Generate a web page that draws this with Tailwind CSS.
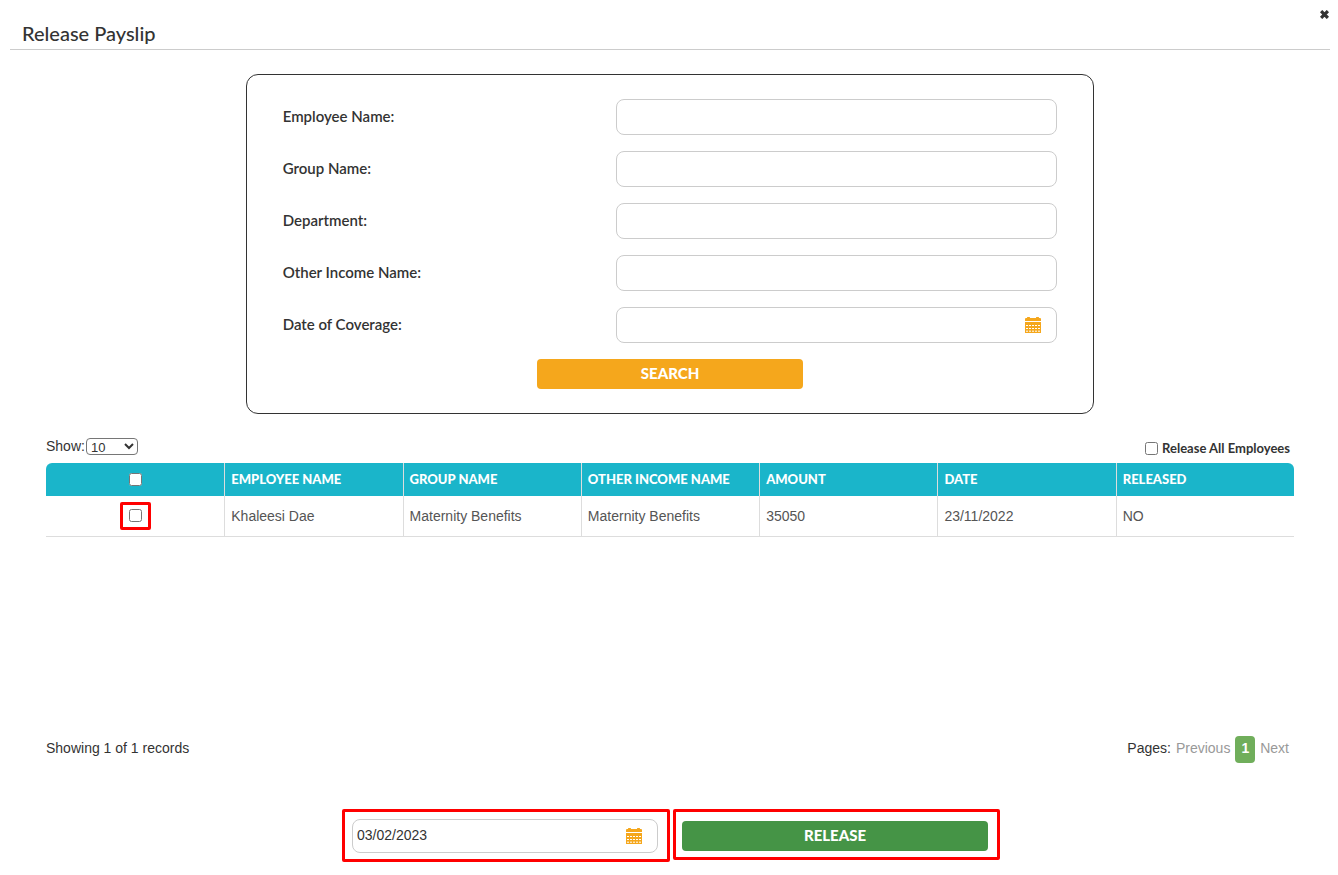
<!DOCTYPE html>
<html lang="en">
<head>
    <meta charset="UTF-8">
    <meta name="viewport" content="width=device-width, initial-scale=1.0">
    <title>Release Payslip</title>
    <script src="https://cdn.jsdelivr.net/npm/@tailwindcss/browser@4"></script>
</head>
<body class="bg-white font-['Liberation_Sans',Arial,sans-serif] text-sm text-[#333]">
    <!-- calendar icon, used by both date fields -->
    <svg class="hidden">
        <symbol id="calendar" viewBox="0 0 16 16">
            <path fill="#f5a71c" d="M0 4V2a1 1 0 0 1 1-1h1a1 1 0 0 1 3 0h6a1 1 0 0 1 3 0h1a1 1 0 0 1 1 1v2zM0 5h16v11H0z"/>
            <path stroke="#fff" stroke-width="1" stroke-dasharray="2 1" d="M1 8.5h14M1 11.5h14M1 14.2h14"/>
        </symbol>
    </svg>

    <header class="relative ml-2.5 mr-2 flex h-[50px] items-end border-b border-[#ccc] px-3 pb-1">
        <h1 class="font-[Lato,sans-serif] text-xl font-medium leading-6">Release Payslip</h1>
        <button type="button" aria-label="Close" class="absolute right-px top-2.5">
            <svg class="size-[9px]" viewBox="0 0 10 10"><path stroke="#333" stroke-width="3.6" d="M1.2 1.2l7.6 7.6M8.8 1.2L1.2 8.8"/></svg>
        </button>
    </header>

    <main class="ml-[46px] mr-11">
        <!-- Search -->
        <form class="mx-auto mt-6 w-[68%] rounded-xl border border-[#333] px-9 py-6">
            <div class="grid grid-cols-[43%_57%] items-center gap-y-4 font-[Lato,sans-serif] text-[15px] font-semibold">
                <label for="employee">Employee Name:</label>
                <input id="employee" type="text" class="h-9 w-full rounded-lg border border-[#ccc] px-3">
                <label for="group">Group Name:</label>
                <input id="group" type="text" class="h-9 w-full rounded-lg border border-[#ccc] px-3">
                <label for="department">Department:</label>
                <input id="department" type="text" class="h-9 w-full rounded-lg border border-[#ccc] px-3">
                <label for="income">Other Income Name:</label>
                <input id="income" type="text" class="h-9 w-full rounded-lg border border-[#ccc] px-3">
                <label for="coverage">Date of Coverage:</label>
                <div class="flex h-9 items-center rounded-lg border border-[#ccc] pl-3 pr-[15px]">
                    <input id="coverage" type="text" class="min-w-0 flex-1 outline-none">
                    <svg class="size-4"><use href="#calendar"/></svg>
                </div>
            </div>
            <button type="button" class="mx-auto mt-4 block h-[30px] w-[266px] rounded bg-[#f5a71c] font-[Lato,sans-serif] text-[15px] font-black text-white">SEARCH</button>
        </form>

        <!-- Table -->
        <div class="mt-6 flex h-[25px] items-start justify-between">
            <div class="flex items-center gap-px leading-[17px]">
                <label for="show">Show:</label>
                <select id="show" class="h-[17px] w-[52px] rounded-sm border border-[#767676] text-[13px] leading-none">
                    <option>10</option>
                    <option>25</option>
                </select>
            </div>
            <label class="flex items-center gap-1 pr-1 pt-px font-[Lato,sans-serif] text-[13px] font-bold leading-[18px]">
                <input type="checkbox" class="size-[13px]">Release All Employees
            </label>
        </div>
        <table class="w-full table-fixed border-separate border-spacing-0 text-left text-[#555]">
            <thead class="font-[Lato,sans-serif] text-[13px] text-white">
                <tr class="h-[33px] *:border-l *:border-[#ddd] *:bg-[#1ab5ca] *:px-1.5 *:font-black *:first:border-l-0">
                    <th class="rounded-tl-md text-center"><input type="checkbox" aria-label="Select all" class="block mx-auto size-[13px]"></th>
                    <th>EMPLOYEE NAME</th>
                    <th>GROUP NAME</th>
                    <th>OTHER INCOME NAME</th>
                    <th>AMOUNT</th>
                    <th>DATE</th>
                    <th class="rounded-tr-md">RELEASED</th>
                </tr>
            </thead>
            <tbody>
                <tr class="h-[41px] *:border-b *:border-l *:border-[#ddd] *:px-1.5 *:pb-px *:first:border-l-0">
                    <td>
                        <div class="mx-auto flex h-7 w-[31px] items-center justify-center rounded-xs border-3 border-[#f00]">
                            <input type="checkbox" aria-label="Select Khaleesi Dae" class="size-[13px]">
                        </div>
                    </td>
                    <td>Khaleesi Dae</td>
                    <td>Maternity Benefits</td>
                    <td>Maternity Benefits</td>
                    <td>35050</td>
                    <td>23/11/2022</td>
                    <td>NO</td>
                </tr>
            </tbody>
        </table>

        <div class="mt-[199px] flex items-center justify-between leading-[25px]">
            <p class="pb-0.5">Showing 1 of 1 records</p>
            <nav class="flex items-center gap-[5px] pr-[5px] text-[#999]">
                <span class="pb-0.5 text-[#333]">Pages:</span>
                <a href="#" class="pb-0.5">Previous</a>
                <a href="#" class="rounded bg-[#70ae5b] px-1.5 pb-0.5 font-bold text-white">1</a>
                <a href="#" class="pb-0.5">Next</a>
            </nav>
        </div>

        <!-- Release -->
        <form class="mt-[46px] flex items-start justify-center gap-[3px] pl-0.5">
            <div class="w-[328px] rounded-xs border-3 border-[#f00] px-[7px] pb-[6px] pt-[7px]">
                <div class="mr-0.5 flex h-[34px] items-center rounded-lg border border-[#ccc] pl-1 pr-[15px]">
                    <input type="text" aria-label="Release date" value="03/02/2023" class="min-w-0 flex-1 pb-0.5 text-sm outline-none">
                    <svg class="size-4"><use href="#calendar"/></svg>
                </div>
            </div>
            <div class="w-[327px] rounded-xs border-3 border-[#f00] pb-1.5 pl-1.5 pr-[9px] pt-[9px]">
                <button type="button" class="block h-[30px] w-full rounded bg-[#459446] font-[Lato,sans-serif] text-[15px] font-black text-white">RELEASE</button>
            </div>
        </form>
    </main>
</body>
</html>
